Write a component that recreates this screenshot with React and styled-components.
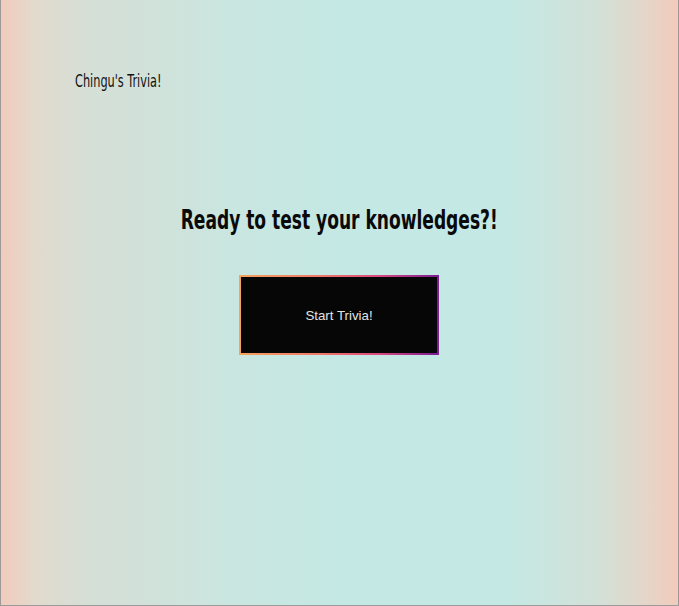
import React from 'react';
import styled, { createGlobalStyle } from 'styled-components';

const GlobalStyle = createGlobalStyle`
  html, body {
    margin: 0;
    padding: 0;
  }
  body {
    font-family: "DejaVu Sans Condensed", sans-serif;
  }
`;

const Page = styled.div`
  box-sizing: border-box;
  min-height: 100vh;
  border: 1px solid #9a9a9a;
  border-top: none;
  background: linear-gradient(
    to right,
    #f2cbbc 0%,
    #e2dacd 5%,
    #d5dfd6 13%,
    #c9e6e0 35%,
    #c4e8e4 50%,
    #c4e8e3 75%,
    #d2e1d8 88%,
    #e4d6c9 95%,
    #f2cbbc 100%
  );
  display: flex;
  flex-direction: column;
`;

const Header = styled.header`
  padding: 71px 0 0 74px;
  height: 20px;
`;

/* condensed display face squeezed to match the narrow heading font */
const Logo = styled.h1`
  display: inline-block;
  margin: 0;
  font-family: "DejaVu Sans Condensed", sans-serif;
  font-weight: 400;
  font-size: 17px;
  line-height: 20px;
  color: #111;
  transform: scaleX(0.74);
  transform-origin: left center;
`;

const Main = styled.main`
  display: flex;
  flex-direction: column;
  align-items: center;
  padding-top: 114px;
  gap: 40px;
  margin-right: 1px;
`;

const Title = styled.h2`
  margin: 0;
  font-family: "DejaVu Sans Condensed", sans-serif;
  font-weight: 700;
  font-size: 26px;
  line-height: 30px;
  color: #0a0a0a;
  white-space: nowrap;
  transform: scaleX(0.73);
`;

const StartButton = styled.button`
  box-sizing: border-box;
  width: 200px;
  height: 80px;
  background: #060606;
  color: #e4e4e4;
  font-family: "Liberation Sans", Arial, sans-serif;
  font-size: 13.3px;
  border: 2px solid;
  border-image: linear-gradient(to right, #f4a35e 0%, #f2776a 40%, #d94a7e 70%, #7d1c94 100%) 1;
  cursor: pointer;
`;

export default function App() {
  return (
    <Page>
      <GlobalStyle />
      <Header>
        <Logo>Chingu's Trivia!</Logo>
      </Header>
      <Main>
        <Title>Ready to test your knowledges?!</Title>
        <StartButton>Start Trivia!</StartButton>
      </Main>
    </Page>
  );
}
